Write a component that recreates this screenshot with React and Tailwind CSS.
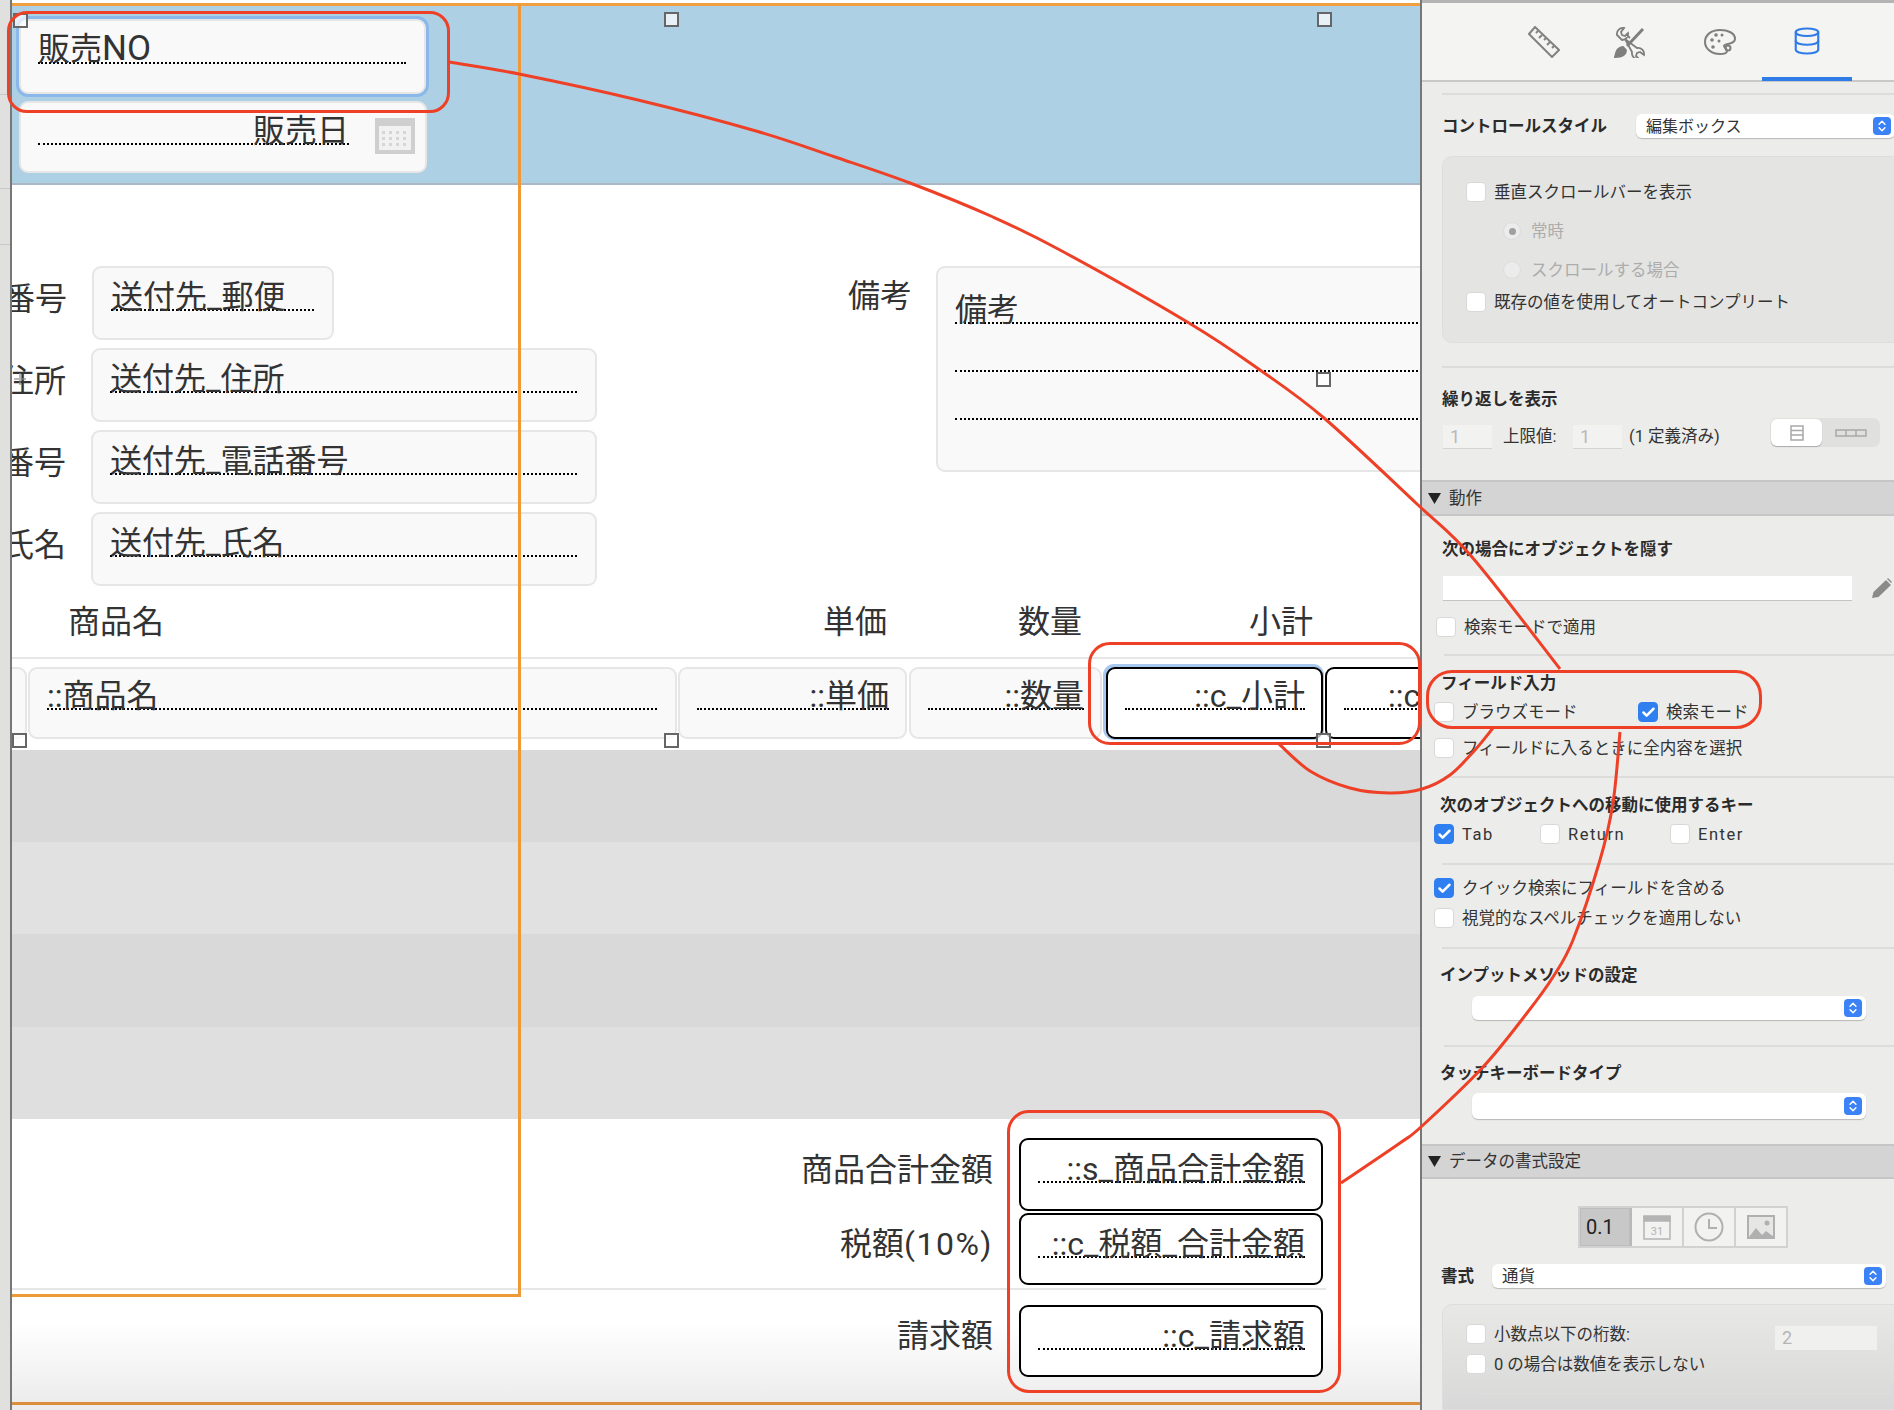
import { Check, ChevronsUpDown, Database } from 'lucide-react';

const RED = '#ee4027';

// 手書きの注釈カーブ: 通過点を滑らかにつなぐ
const curve = (pts) => {
  let d = `M${pts[0][0]} ${pts[0][1]}`;
  for (let i = 0; i < pts.length - 1; i++) {
    const p0 = pts[i - 1] || pts[i];
    const p1 = pts[i];
    const p2 = pts[i + 1];
    const p3 = pts[i + 2] || p2;
    d += ` C${p1[0] + (p2[0] - p0[0]) / 6} ${p1[1] + (p2[1] - p0[1]) / 6} ${p2[0] - (p3[0] - p1[0]) / 6} ${p2[1] - (p3[1] - p1[1]) / 6} ${p2[0]} ${p2[1]}`;
  }
  return d;
};

const curveA = [[449, 62], [519, 74], [638, 100], [756, 131], [835, 157], [910, 183], [993, 217], [1060, 250], [1189, 323], [1260, 370], [1324, 418], [1417, 504], [1472, 557], [1560, 669]];
const curveB = [[1278, 743], [1310, 771], [1350, 788], [1389, 793], [1422, 789], [1450, 775], [1475, 750], [1493, 728]];
const curveC = [[1341, 1183], [1400, 1143], [1422, 1126], [1483, 1067], [1527, 1013], [1553, 977], [1573, 940], [1600, 860], [1613, 803], [1620, 732]];

function Field({ text, className = '', line = 'h-[43px]', right, dark, children, inset = '' }) {
  return (
    <div className={`flex shrink-0 items-start rounded-[9px] border-2 pl-[17px] ${right ? 'pr-[16px]' : 'pr-[18px]'} ${dark ? 'border-black bg-white' : 'border-[#e6e6e6] bg-[#f9f9f9]'} ${className}`}>
      <div className={`flex min-w-0 flex-1 items-end whitespace-nowrap border-b-2 border-dotted border-black ${right ? 'justify-end' : ''} ${line}`}>
        <span className={`-mb-[4px] leading-none ${inset}`}>{text}</span>
      </div>
      {children}
    </div>
  );
}

function CalendarIcon() {
  return (
    <svg viewBox="0 0 40 36" className="mt-[15px] ml-[26px] -mr-[8px] h-[36px] w-[40px] shrink-0">
      <rect x="2" y="2" width="36" height="32" fill="#f1f1f1" stroke="#cfcfcf" strokeWidth="4" />
      <rect x="2" y="2" width="36" height="6" fill="#cfcfcf" />
      {[7, 14, 21, 28].map((x) => [13, 19, 25].map((y) => <rect key={`${x}-${y}`} x={x} y={y} width="3" height="3" fill="#d6d6d6" />))}
    </svg>
  );
}

function LabelRow({ label, text, width }) {
  return (
    <div className="flex h-[74px] items-start">
      <div className="flex h-[66px] w-[55px] items-center justify-end overflow-hidden whitespace-nowrap">{label}</div>
      <Field text={text} className={`ml-[25px] h-[74px] ${width}`} />
    </div>
  );
}

function TotalRow({ label, text, className }) {
  return (
    <div className={`flex items-center ${className}`}>
      <div className="w-[981px] pb-[10px] text-right">{label}</div>
      <Field text={text} right dark className="ml-[26px] h-full w-[304px]" />
    </div>
  );
}

function Canvas() {
  return (
    <div className="flex h-full w-[1408px] shrink-0 flex-col overflow-hidden bg-white pt-[3px] text-[32px] text-[#333]">
      <div className="mt-[3px] flex h-[179px] shrink-0 flex-col gap-[7px] border-b-2 border-[#a9b8c4] bg-[#aed0e4] pt-[13px] pl-[7px]">
        <Field text={<>販売<span className="text-[35px]">NO</span></>} className="h-[75px] w-[407px] shadow-[0_0_0_3px_#8ab8ea]" />
        <Field text="販売日" right line="h-[42px]" className="h-[72px] w-[408px] !pr-[18px]">
          <CalendarIcon />
        </Field>
      </div>

      <div className="flex h-[401px] shrink-0 pt-[81px]">
        <div className="flex w-[585px] shrink-0 flex-col gap-[8px]">
          <LabelRow label="郵便番号" text="送付先_郵便" width="w-[242px]" />
          <LabelRow label="先住所" text="送付先_住所" width="w-[506px]" />
          <LabelRow label="電話番号" text="送付先_電話番号" width="w-[506px]" />
          <LabelRow label="氏名" text="送付先_氏名" width="w-[506px]" />
        </div>
        <div className="ml-[251px] flex items-start">
          <div className="flex h-[60px] w-[64px] shrink-0 items-center whitespace-nowrap">備考</div>
          <div className="ml-[24px] h-[206px] w-[600px] shrink-0 rounded-[9px] border-2 border-[#e6e6e6] bg-[#f9f9f9] pl-[17px]">
            <div className="flex h-[56px] items-end border-b-2 border-dotted border-black">
              <span className="-mb-[4px] leading-none">備考</span>
            </div>
            <div className="h-[48px] border-b-2 border-dotted border-black" />
            <div className="h-[48px] border-b-2 border-dotted border-black" />
          </div>
        </div>
      </div>

      <div className="flex h-[73px] shrink-0 items-center border-b-2 border-[#e6e6e6] pl-[56px]">
        <span className="w-[755px]">商品名</span>
        <span className="w-[195px]">単価</span>
        <span className="w-[231px]">数量</span>
        <span>小計</span>
      </div>

      <div className="flex h-[91px] shrink-0 items-start pt-[8px]">
        <div className="h-[72px] w-[15px] shrink-0 rounded-r-[9px] border-2 border-l-0 border-[#e6e6e6] bg-[#f9f9f9]" />
        <Field text="::商品名" line="h-[41px]" className="ml-[1px] h-[72px] w-[649px]" />
        <Field text="::単価" right line="h-[41px]" className="ml-[1px] h-[72px] w-[229px]" />
        <Field text="::数量" right line="h-[41px]" className="ml-[2px] h-[72px] w-[193px]" />
        <Field text="::c_小計" right dark line="h-[41px]" className="ml-[4px] h-[72px] w-[217px] shadow-[-1px_-1px_0_2px_#a8c8f0]" />
        <Field text="::c" inset="ml-[44px]" dark line="h-[41px]" className="ml-[2px] h-[72px] w-[117px] overflow-hidden !pr-0" />
      </div>

      <div className="h-[92px] shrink-0 bg-[#d9d9d9]" />
      <div className="h-[92px] shrink-0 bg-[#e1e1e1]" />
      <div className="h-[93px] shrink-0 bg-[#d9d9d9]" />
      <div className="h-[92px] shrink-0 bg-[#dfdfdf]" />

      <div className="flex h-[283px] shrink-0 flex-col bg-linear-to-b from-white from-[72%] to-[#ececec] pt-[19px]">
        <TotalRow label="商品合計金額" text="::s_商品合計金額" className="h-[73px]" />
        <TotalRow label={<>税額<span className="tracking-[1.5px]">(10%)</span></>} text="::c_税額_合計金額" className="mt-[2px] h-[72px]" />
        <div className="mt-[3px] h-[2px] w-[1314px] bg-[#e6e6e6]" />
        <TotalRow label="請求額" text="::c_請求額" className="mt-[15px] h-[72px]" />
      </div>
      <div className="h-[3px] shrink-0 bg-[#dc8f3a]" />
      <div className="flex-1 bg-[#ececec]" />
    </div>
  );
}

function Box({ checked }) {
  return (
    <span className={`flex h-[20px] w-[20px] shrink-0 items-center justify-center rounded-[4px] border ${checked ? 'border-[#2f7ff0] bg-[#2f7ff0]' : 'border-[#d8d8d8] bg-white'}`}>
      {checked && <Check size={15} strokeWidth={4} color="white" />}
    </span>
  );
}

function CheckRow({ label, checked, className = '', style = '' }) {
  return (
    <div className={`flex h-[20px] items-center ${className}`}>
      <Box checked={checked} />
      <span className={`ml-[8px] pt-[2px] whitespace-nowrap ${style}`}>{label}</span>
    </div>
  );
}

function Radio({ label, on, className = '' }) {
  return (
    <div className={`ml-[37px] flex h-[18px] items-center text-[#acacac] ${className}`}>
      <span className="flex h-[18px] w-[18px] items-center justify-center rounded-full border border-[#dcdcdc] bg-[#ececec]">
        {on && <span className="h-[7px] w-[7px] rounded-full bg-[#a0a0a0]" />}
      </span>
      <span className="ml-[10px] pt-[2px]">{label}</span>
    </div>
  );
}

function Stepper() {
  return (
    <span className="flex h-[18px] w-[18px] shrink-0 items-center justify-center rounded-[4px] bg-[#3b82f6]">
      <ChevronsUpDown size={14} strokeWidth={2.5} color="white" />
    </span>
  );
}

function Select({ text, className = '' }) {
  return (
    <div className={`flex items-center rounded-[6px] bg-white pr-[4px] pl-[10px] shadow-[0_1px_1px_#b8b8b8] ${className}`}>
      <span className="flex-1 pt-[2px]">{text}</span>
      <Stepper />
    </div>
  );
}

const Divider = ({ className = '' }) => <div className={`h-[2px] shrink-0 bg-[#dcdcda] ${className}`} />;
const Heading = ({ children, className = '' }) => <div className={`flex h-[24px] shrink-0 items-center pt-[2px] font-bold whitespace-nowrap text-[#2b2b2b] ${className}`}>{children}</div>;

function Section({ title, className = '' }) {
  return (
    <div className={`flex items-center border-y-2 border-[#c6c6c6] bg-[#d4d4d4] pl-[6px] ${className}`}>
      <svg viewBox="0 0 13 11" className="h-[11px] w-[13px]">
        <path d="M0 0h13L6.5 11z" fill="#222" />
      </svg>
      <span className="ml-[8px] pt-[2px]">{title}</span>
    </div>
  );
}

function TabIcons() {
  return (
    <div className="flex h-[79px] shrink-0 items-center border-b-2 border-[#c8c8c8] bg-[#f4f4f2] pl-[106px]">
      <svg viewBox="0 0 32 32" className="h-[32px] w-[32px]" fill="none" stroke="#828282" strokeWidth="2">
        <path d="M1 8 7 1l24 23-7 7z" />
        <path d="M10 5 8 7M14 9l-3 3M18 12l-2 2M22 16l-3 3M26 20l-2 2" />
      </svg>
      <svg viewBox="0 0 32 32" className="ml-[54px] h-[32px] w-[32px]" fill="none" stroke="#7f7f7f" strokeWidth="1.8">
        <path d="M3 9a6 6 0 0 1 7-7L7 6l1 3 3 1 3-3a6 6 0 0 1-6 7zM11 13l12 9a6 6 0 0 1 7 7l-4-3-3 1-1 3 3 3a6 6 0 0 1-7-7zM13 9l3 3" />
        <path d="M29 3 13 20" strokeWidth="3" />
        <path d="M1 31c1-6 3-10 8-10l3 3c0 5-5 7-11 7z" fill="#7f7f7f" />
      </svg>
      <svg viewBox="0 0 32 26" className="ml-[58px] h-[26px] w-[32px]" fill="none" stroke="#7f7f7f" strokeWidth="2">
        <path d="M16 1C7 1 1 6 1 13s7 12 15 12c4 0 7-1 7-3 0-3-3-3-3-5 0-3 11-1 11-7C31 4 24 1 16 1z" />
        <circle cx="8" cy="11" r="1.8" fill="#7f7f7f" stroke="none" />
        <circle cx="12" cy="6" r="1.8" fill="#7f7f7f" stroke="none" />
        <circle cx="18" cy="6" r="1.5" fill="#7f7f7f" stroke="none" />
        <circle cx="15" cy="12" r="1.5" fill="#7f7f7f" stroke="none" />
        <circle cx="24" cy="19" r="2.5" />
        <circle cx="9" cy="18" r="1.8" fill="#7f7f7f" stroke="none" />
      </svg>
      <div className="-mb-[2px] ml-[26px] flex h-full w-[90px] items-center justify-center border-b-4 border-[#2f7be8]">
        <Database size={30} strokeWidth={1.7} color="#2f7be8" />
      </div>
    </div>
  );
}

function Inspector() {
  return (
    <div className="flex h-full w-[472px] shrink-0 flex-col overflow-hidden bg-[#ececea] text-[16.5px] leading-none text-[#333]">
      <div className="h-[3px] shrink-0 bg-[#b4b4b4]" />
      <TabIcons />
      <Divider className="mt-[11px] ml-[20px]" />
      <div className="mt-[19px] ml-[20px] flex h-[24px] w-[500px] shrink-0 items-center">
        <Heading className="w-[194px]">コントロールスタイル</Heading>
        <Select text="編集ボックス" className="h-[24px] w-[259px] text-[16px]" />
      </div>

      <div className="mt-[18px] ml-[20px] h-[187px] w-[480px] shrink-0 rounded-[10px] border border-[#dedede] bg-[#e4e4e2] pt-[25px] pl-[23px]">
        <CheckRow label="垂直スクロールバーを表示" />
        <Radio on label="常時" className="mt-[20px]" />
        <Radio label="スクロールする場合" className="mt-[21px]" />
        <CheckRow label="既存の値を使用してオートコンプリート" className="mt-[13px]" />
      </div>

      <Divider className="mt-[23px] ml-[20px]" />
      <Heading className="mt-[19px] ml-[20px]">繰り返しを表示</Heading>
      <div className="mt-[7px] flex h-[30px] shrink-0 items-start pr-[14px] pl-[21px]">
        <span className="mt-[7px] flex h-[23px] w-[49px] items-center bg-[#f2f2f0] pl-[7px] text-[18px] text-[#b8b8b8] shadow-[0_1px_0_#d4d4d4]">1</span>
        <span className="mt-[7px] ml-[11px] flex h-[23px] w-[70px] items-center pt-[2px]">上限値:</span>
        <span className="mt-[7px] flex h-[23px] w-[49px] items-center bg-[#f2f2f0] pl-[7px] text-[18px] text-[#b8b8b8] shadow-[0_1px_0_#d4d4d4]">1</span>
        <span className="mt-[7px] ml-[7px] flex h-[23px] items-center pt-[2px]">(1 定義済み)</span>
        <div className="ml-auto flex h-[29px] w-[110px] rounded-[7px] bg-[#e0e0de] p-[1px]">
          <div className="flex w-[51px] items-center justify-center rounded-[6px] bg-white shadow-[0_1px_1px_#aaa]">
            <svg viewBox="0 0 14 16" className="h-[16px] w-[14px]" fill="none" stroke="#a8a8a8" strokeWidth="1.5">
              <path d="M1 1h12v14H1zM1 5.5h12M1 10h12" />
            </svg>
          </div>
          <div className="flex flex-1 items-center justify-center">
            <svg viewBox="0 0 32 8" className="h-[8px] w-[32px]" fill="none" stroke="#a8a8a8" strokeWidth="1.5">
              <path d="M1 1h30v6H1zM11 1v6M21 1v6" />
            </svg>
          </div>
        </div>
      </div>

      <Section title="動作" className="mt-[32px] h-[36px] shrink-0" />
      <Heading className="mt-[21px] ml-[20px]">次の場合にオブジェクトを隠す</Heading>
      <div className="mt-[15px] ml-[21px] flex h-[24px] shrink-0 items-center">
        <div className="h-[24px] w-[409px] bg-white shadow-[0_1px_0_#c4c4c4]" />
        <svg viewBox="0 0 22 22" className="ml-[19px] h-[22px] w-[22px]" fill="#8a8a8a">
          <path d="M1 21l1.5-6L15 3l5 5L7.5 20z" />
          <path d="M17 1l4 4-1 1-4-4z" />
        </svg>
      </div>
      <CheckRow label="検索モードで適用" className="mt-[17px] ml-[14px] shrink-0" />
      <Divider className="mt-[17px] ml-[22px]" />
      <Heading className="mt-[15px] ml-[19px]">フィールド入力</Heading>
      <div className="mt-[7px] ml-[12px] flex shrink-0">
        <CheckRow label="ブラウズモード" className="w-[204px]" />
        <CheckRow checked label="検索モード" />
      </div>
      <CheckRow label="フィールドに入るときに全内容を選択" className="mt-[16px] ml-[12px] shrink-0" />
      <Divider className="mt-[18px] ml-[22px]" />
      <Heading className="mt-[15px] ml-[18px]">次のオブジェクトへの移動に使用するキー</Heading>
      <div className="mt-[7px] ml-[12px] flex shrink-0">
        <CheckRow checked label="Tab" className="w-[106px]" style="tracking-[1.5px]" />
        <CheckRow label="Return" className="w-[130px]" style="tracking-[1.5px]" />
        <CheckRow label="Enter" style="tracking-[1.5px]" />
      </div>
      <Divider className="mt-[19px] ml-[20px]" />
      <CheckRow checked label="クイック検索にフィールドを含める" className="mt-[13px] ml-[12px] shrink-0" />
      <CheckRow label="視覚的なスペルチェックを適用しない" className="mt-[10px] ml-[12px] shrink-0" />
      <Divider className="mt-[19px] ml-[20px]" />
      <Heading className="mt-[14px] ml-[18px]">インプットメソッドの設定</Heading>
      <Select className="mt-[9px] ml-[50px] h-[24px] w-[394px] shrink-0" />
      <Divider className="mt-[25px] ml-[22px]" />
      <Heading className="mt-[14px] ml-[18px]">タッチキーボードタイプ</Heading>
      <Select className="mt-[8px] ml-[50px] h-[26px] w-[394px] shrink-0" />

      <Section title="データの書式設定" className="mt-[25px] h-[35px] shrink-0" />
      <div className="mt-[27px] ml-[156px] flex h-[42px] w-[210px] shrink-0 border-2 border-[#d2d2d2] bg-[#f2f2f0]">
        <div className="flex w-[52px] items-center border-r-2 border-[#b8b8b8] bg-[#c8c8c8] pl-[6px] text-[20px] text-[#222] shadow-[inset_0_0_0_1px_#bdbdbd]">0.1</div>
        <div className="flex w-[52px] items-center justify-center border-r-2 border-[#d2d2d2]">
          <svg viewBox="0 0 28 26" className="h-[26px] w-[28px]" fill="none" stroke="#b4b4b4" strokeWidth="1.5">
            <path d="M1 3h26v22H1z" />
            <path d="M1 2h26v5H1z" fill="#b4b4b4" />
            <text x="14" y="21" fontSize="11" textAnchor="middle" fill="#b4b4b4" stroke="none">31</text>
          </svg>
        </div>
        <div className="flex w-[52px] items-center justify-center border-r-2 border-[#d2d2d2]">
          <svg viewBox="0 0 30 30" className="h-[30px] w-[30px]" fill="none" stroke="#b0b0b0" strokeWidth="2">
            <circle cx="15" cy="15" r="13.5" />
            <path d="M15 7v9h8" />
          </svg>
        </div>
        <div className="flex flex-1 items-center justify-center">
          <svg viewBox="0 0 28 24" className="h-[24px] w-[28px]" fill="#e6e6e4" stroke="#b0b0b0" strokeWidth="2">
            <path d="M1 1h26v22H1z" />
            <path d="M2 22l7-9 6 7 4-4 8 6z" fill="#b0b0b0" stroke="none" />
            <circle cx="20" cy="8" r="2.5" fill="#b0b0b0" stroke="none" />
          </svg>
        </div>
      </div>
      <div className="mt-[16px] ml-[19px] flex h-[24px] shrink-0 items-center">
        <Heading className="w-[51px]">書式</Heading>
        <Select text="通貨" className="h-[24px] w-[394px]" />
      </div>
      <div className="mt-[16px] ml-[20px] w-[470px] flex-1 rounded-t-[10px] border border-[#dedede] bg-linear-to-b from-[#e8e8e6] to-[#d8d8d8] pt-[19px] pl-[23px]">
        <div className="flex h-[20px] items-center pr-[34px]">
          <CheckRow label="小数点以下の桁数:" />
          <span className="mt-[8px] ml-auto flex h-[24px] w-[102px] items-center bg-[#f0f0ee] pl-[7px] text-[18px] text-[#b4b4b4]">2</span>
        </div>
        <CheckRow label="0 の場合は数値を表示しない" className="mt-[10px]" />
        <Divider className="mt-[19px] ml-[9px] w-[416px] bg-[#cacaca]" />
      </div>
    </div>
  );
}

const Handle = ({ className }) => <div className={`absolute h-[15px] w-[15px] border-2 border-[#666] bg-white/70 ${className}`} />;
const Note = ({ className }) => <div className={`absolute border-[3px] border-[#ee4027] ${className}`} />;

export default function App() {
  return (
    <div className="relative flex h-[1410px] w-[1894px] overflow-hidden font-[Roboto,'Noto_Sans_CJK_JP',sans-serif]">
      <div className="h-full w-[12px] shrink-0 border-r-2 border-[#777] bg-[#e0e0de]">
        <div className="mt-[94px] h-[1px] bg-[#c8c8c8]" />
        <div className="mt-[93px] h-[1px] bg-[#c8c8c8]" />
        <div className="mt-[55px] h-[1px] bg-[#c8c8c8]" />
      </div>
      <Canvas />
      <div className="h-full w-[2px] shrink-0 bg-[#777]" />
      <Inspector />

      {/* オーバーレイ: 選択枠、ハンドル、注釈 */}
      <div className="absolute top-[3px] left-[12px] h-[3px] w-[1408px] bg-[#f0a040]" />
      <div className="absolute top-[3px] left-[12px] h-[1294px] w-[509px] border-r-[3px] border-b-[3px] border-[#ee9a36]" />
      <Handle className="top-[13px] left-[13px]" />
      <Handle className="top-[12px] left-[664px]" />
      <Handle className="top-[12px] left-[1317px]" />
      <Handle className="top-[372px] left-[1316px]" />
      <Handle className="top-[733px] left-[12px]" />
      <Handle className="top-[733px] left-[664px]" />
      <Handle className="top-[733px] left-[1316px]" />
      <div className="absolute top-[373px] left-[14px] h-[12px] w-[12px] opacity-60">
        <div className="mt-[5px] h-[2px] bg-[#888]" />
        <div className="absolute top-0 left-[5px] h-[12px] w-[2px] bg-[#888]" />
      </div>
      <Note className="top-[11px] left-[7px] h-[102px] w-[443px] rounded-[20px]" />
      <Note className="top-[642px] left-[1088px] h-[103px] w-[333px] rounded-[22px]" />
      <Note className="top-[670px] left-[1426px] h-[59px] w-[336px] rounded-[26px]" />
      <Note className="top-[1110px] left-[1007px] h-[283px] w-[334px] rounded-[22px]" />
      <svg viewBox="0 0 1894 1410" className="pointer-events-none absolute top-0 left-0 h-[1410px] w-[1894px]" fill="none" stroke={RED} strokeWidth="3">
        <path d={curve(curveA)} />
        <path d={curve(curveB)} />
        <path d={curve(curveC)} />
      </svg>
    </div>
  );
}
